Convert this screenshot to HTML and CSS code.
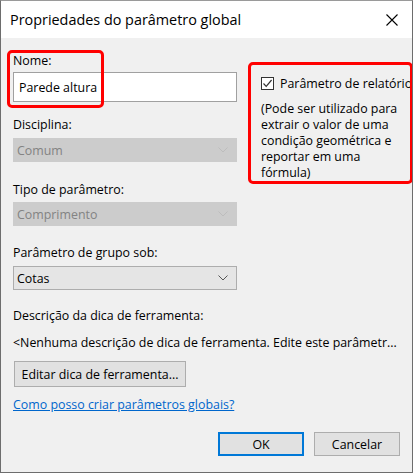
FILE: index.html
```html
<!DOCTYPE html>
<html lang="pt">
<head>
<meta charset="utf-8">
<link rel="stylesheet" href="styles.css">
</head>
<body>
<div class="window">
  <div class="titlebar">
    <span class="title">Propriedades do parâmetro global</span>
    <svg class="close" width="12" height="12" viewBox="0 0 12 12"><path d="M0.5 0.5 L11.5 11.5 M11.5 0.5 L0.5 11.5" stroke="#000" stroke-width="1.1" fill="none"/></svg>
  </div>
  <div class="content">
    <div class="columns">
      <div class="left">
        <div class="label first">Nome:</div>
        <div class="textbox">Parede altura</div>
        <div class="label l-disc">Disciplina:</div>
        <div class="select disabled"><span>Comum</span><svg class="chev" width="10" height="6" viewBox="0 0 10 6"><path d="M0.5 0.5 L5 5 L9.5 0.5" stroke="#bdbdbd" fill="none"/></svg></div>
        <div class="label l-tipo">Tipo de parâmetro:</div>
        <div class="select disabled"><span>Comprimento</span><svg class="chev" width="10" height="6" viewBox="0 0 10 6"><path d="M0.5 0.5 L5 5 L9.5 0.5" stroke="#bdbdbd" fill="none"/></svg></div>
        <div class="label l-grupo">Parâmetro de grupo sob:</div>
        <div class="select"><span>Cotas</span><svg class="chev" width="10" height="6" viewBox="0 0 10 6"><path d="M0.5 0.5 L5 5 L9.5 0.5" stroke="#555" fill="none"/></svg></div>
      </div>
      <div class="right">
        <div class="check-row">
          <span class="checkbox"><svg width="11" height="11" viewBox="0 0 11 11"><path d="M1.5 5.5 L4.2 8.3 L9.6 2" stroke="#333" stroke-width="1.2" fill="none"/></svg></span>
          <span class="check-label">Parâmetro de relatório</span>
        </div>
        <div class="note">(Pode ser utilizado para extrair o valor de uma condição geométrica e reportar em uma fórmula)</div>
      </div>
    </div>
    <div class="label l-desc">Descrição da dica de ferramenta:</div>
    <div class="tip">&lt;Nenhuma descrição de dica de ferramenta. Edite este parâmetr...</div>
    <div class="btn edit">Editar dica de ferramenta...</div>
    <a class="link" href="#">Como posso criar parâmetros globais?</a>
    <div class="footer">
      <div class="btn ok">OK</div>
      <div class="btn cancel">Cancelar</div>
    </div>
  </div>
  <div class="mark mark-name"></div>
  <div class="mark mark-report"></div>
</div>
</body>
</html>
```

FILE: styles.css
```css
* { box-sizing: border-box; }
html, body { margin: 0; padding: 0; background: #fff; }
body {
  font-family: "Open Sans", "Noto Sans", sans-serif;
  font-size: 12.4px;
  color: #000;
}
.window {
  position: relative;
  width: 413px;
  height: 473px;
  border: 1px solid #6d6d6d;
  border-top-color: #9a9a9a;
  background: #f0f0f0;
  display: flex;
  flex-direction: column;
  overflow: hidden;
}
.titlebar {
  height: 37px;
  background: #fff;
  display: flex;
  align-items: center;
  padding-left: 9px;
  padding-right: 14px;
  flex: none;
}
.title {
  font-size: 14.4px;
  flex: 1;
  line-height: 20px;
}
.close { display: block; }
.content {
  flex: 1;
  display: flex;
  flex-direction: column;
  padding: 0 12px 0 12px;
}
.columns { display: flex; }
.left { width: 224px; flex: none; display: flex; flex-direction: column; }
.right { margin-left: 24px; padding-top: 37px; width: 142px; flex: none; }
.label { line-height: 16px; height: 16px; white-space: nowrap; }
.first { margin-top: 15px; }
.textbox {
  margin-top: 3px;
  height: 30px;
  background: #fff;
  border: 1px solid #a0a0a0;
  padding-left: 5px;
  display: flex;
  align-items: center;
}
.l-disc { margin-top: 15px; }
.l-tipo { margin-top: 20px; }
.l-grupo { margin-top: 19px; }
.select {
  margin-top: 5px;
  height: 24px;
  background: #e5e5e5;
  border: 1px solid #adadad;
  display: flex;
  align-items: center;
  justify-content: space-between;
  padding: 0 8px 0 3px;
}
.select.disabled {
  background: #cccccc;
  border-color: #cccccc;
  color: #838383;
}
.l-tipo + .select { margin-top: 4px; }
.check-row { display: flex; align-items: center; height: 16px; }
.checkbox {
  width: 13px; height: 13px;
  border: 1px solid #333;
  background: #fff;
  display: flex;
  align-items: center;
  justify-content: center;
  margin-right: 6px;
  flex: none;
}
.checkbox svg { display: block; }
.check-label { white-space: nowrap; }
.note { margin-top: 10px; line-height: 16px; }
.l-desc { margin-top: 18px; }
.tip { margin-top: 11px; line-height: 16px; white-space: nowrap; }
.btn {
  background: #e1e1e1;
  border: 1px solid #adadad;
  display: flex;
  align-items: center;
  justify-content: center;
}
.edit {
  margin-top: 10px;
  margin-left: 1px;
  width: 172px;
  height: 26px;
}
.link {
  margin-top: 10px;
  line-height: 16px;
  color: #0066cc;
  text-decoration: underline;
  align-self: flex-start;
}
.footer {
  margin-top: 19px;
  display: flex;
  justify-content: flex-end;
  gap: 10px;
}
.ok, .cancel { width: 86px; height: 24px; }
.ok { border: 2px solid #0078d7; }
.mark {
  position: absolute;
  border: 3px solid #f00;
  border-radius: 5px;
}
.mark-name { left: 6px; top: 49px; width: 97px; height: 58px; }
.mark-report { left: 247px; top: 61px; width: 165px; height: 122px; }
```
